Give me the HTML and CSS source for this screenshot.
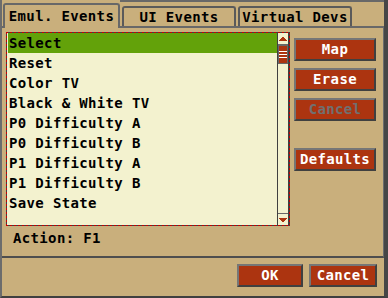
FILE: index.html
```html
<!DOCTYPE html>
<html>
<head>
<meta charset="utf-8">
<title>Event Mapping</title>
<link rel="stylesheet" href="styles.css">
</head>
<body>
<div class="window">
  <div class="tabs">
    <div class="tab active">Emul. Events</div>
    <div class="tab">UI Events</div>
    <div class="tab">Virtual Devs</div>
  </div>
  <div class="panel">
    <div class="main">
      <div class="list">
        <ul class="rows">
          <li class="row selected">Select</li>
          <li class="row">Reset</li>
          <li class="row">Color TV</li>
          <li class="row">Black &amp; White TV</li>
          <li class="row">P0 Difficulty A</li>
          <li class="row">P0 Difficulty B</li>
          <li class="row">P1 Difficulty A</li>
          <li class="row">P1 Difficulty B</li>
          <li class="row">Save State</li>
        </ul>
        <div class="scrollbar">
          <div class="sb-btn up">
            <svg class="arrow" width="8" height="4" viewBox="0 0 8 4" shape-rendering="crispEdges"><path d="M3 0h2v1h1v1h1v1h1v1H0V3h1V2h1V1h1z"/></svg>
          </div>
          <div class="sb-track">
            <div class="thumb"><span></span><span></span><span></span></div>
          </div>
          <div class="sb-btn down">
            <svg class="arrow" width="8" height="4" viewBox="0 0 8 4" shape-rendering="crispEdges"><path d="M0 0h8v1H7v1H6v1H5v1H3V3H2V2H1V1H0z"/></svg>
          </div>
        </div>
      </div>
      <div class="side">
        <button class="btn">Map</button>
        <button class="btn">Erase</button>
        <button class="btn disabled">Cancel</button>
        <button class="btn defaults">Defaults</button>
      </div>
    </div>
    <div class="action">Action: F1</div>
  </div>
  <div class="footer">
    <button class="btn ok">OK</button>
    <button class="btn cancel">Cancel</button>
  </div>
</div>
</body>
</html>
```
FILE: styles.css
```css
* { box-sizing: border-box; }
html, body { margin: 0; padding: 0; }
body {
  width: 388px;
  height: 298px;
  overflow: hidden;
  background: #c9af7c;
  color: #000;
  font-family: "DejaVu Sans Mono", "Liberation Mono", monospace;
  font-weight: bold;
  font-size: 14px;
  letter-spacing: 0.35px;
}
.window {
  width: 388px;
  height: 298px;
  display: flex;
  flex-direction: column;
  border-left: 2px solid #6c6c6c;
  border-right: 4px solid #464646;
  border-bottom: 2px solid #404040;
}
.tabs {
  height: 26px;
  flex: none;
  display: flex;
  align-items: flex-end;
  padding-left: 1px;
  background: linear-gradient(#686868, #686868) 118px 0 / 100% 2px no-repeat;
}
.tab {
  width: 114px;
  height: 20px;
  margin-left: 2px;
  border: 2px solid #5a5a5a;
  border-bottom: 0;
  border-radius: 3px 3px 0 0;
  text-align: center;
  line-height: 18px;
  white-space: nowrap;
}
.tab.active {
  width: 117px;
  height: 25px;
  margin-left: 0;
  margin-bottom: -2px;
  line-height: 22px;
  border-color: #686868;
  background: #c9af7c;
  position: relative;
  z-index: 1;
}
.panel {
  flex: 1;
  display: flex;
  flex-direction: column;
  border-top: 2px solid #686868;
  border-right: 1px solid #6c6c6c;
  border-bottom: 2px solid #4e4e4e;
  padding: 4px 7px 0 4px;
}
.main {
  display: flex;
  gap: 4px;
}
.list {
  width: 284px;
  height: 194px;
  display: flex;
  padding: 1px;
  background:
    repeating-linear-gradient(90deg, #c80000 0 2px, #404040 2px 4px) left top / 100% 1px no-repeat,
    repeating-linear-gradient(90deg, #c80000 0 2px, #404040 2px 4px) left bottom / 100% 1px no-repeat,
    repeating-linear-gradient(180deg, #c80000 0 2px, #404040 2px 4px) left top / 1px 100% no-repeat,
    repeating-linear-gradient(180deg, #c80000 0 2px, #404040 2px 4px) right top / 1px 100% no-repeat;
}
.rows {
  flex: 1;
  list-style: none;
  margin: 0;
  padding: 0;
  background: #f3f2cf;
}
.row {
  height: 20px;
  line-height: 21px;
  padding-left: 2px;
  white-space: nowrap;
}
.row.selected {
  background: #63a20a;
  margin-left: 1px;
  padding-left: 1px;
}
.scrollbar {
  width: 12px;
  display: flex;
  flex-direction: column;
  border-left: 1px solid #404040;
  border-right: 1px solid #404040;
  background: #f3f2cf;
}
.sb-btn {
  height: 12px;
  flex: none;
  display: flex;
  align-items: center;
  justify-content: center;
}
.sb-btn.up { border-bottom: 1px solid #686868; }
.sb-btn.down { border-top: 1px solid #686868; }
.arrow { display: block; fill: #ac3410; }
.sb-track { flex: 1; }
.thumb {
  height: 19px;
  background: #ac3410;
  border: 1px solid #686868;
  display: flex;
  flex-direction: column;
  align-items: center;
  justify-content: center;
  gap: 2px;
}
.thumb span {
  width: 8px;
  height: 1px;
  background: #fff;
}
.side {
  width: 82px;
  display: flex;
  flex-direction: column;
  gap: 7px;
  padding-top: 6px;
}
.btn {
  height: 23px;
  padding: 0;
  background: #ac3410;
  color: #fff;
  border: 2px solid;
  border-color: #767676 #404040 #404040 #767676;
  font: inherit;
  letter-spacing: inherit;
  text-align: center;
  line-height: 19px;
}
.btn.disabled { color: #707070; }
.btn.defaults { margin-top: 20px; }
.action {
  margin-top: 4px;
  padding-left: 7px;
  line-height: 16px;
}
.footer {
  height: 38px;
  flex: none;
  display: flex;
  justify-content: flex-end;
  gap: 6px;
  padding: 6px 7px 0 0;
}
.btn.ok { width: 66px; }
.btn.cancel { width: 68px; }
```
